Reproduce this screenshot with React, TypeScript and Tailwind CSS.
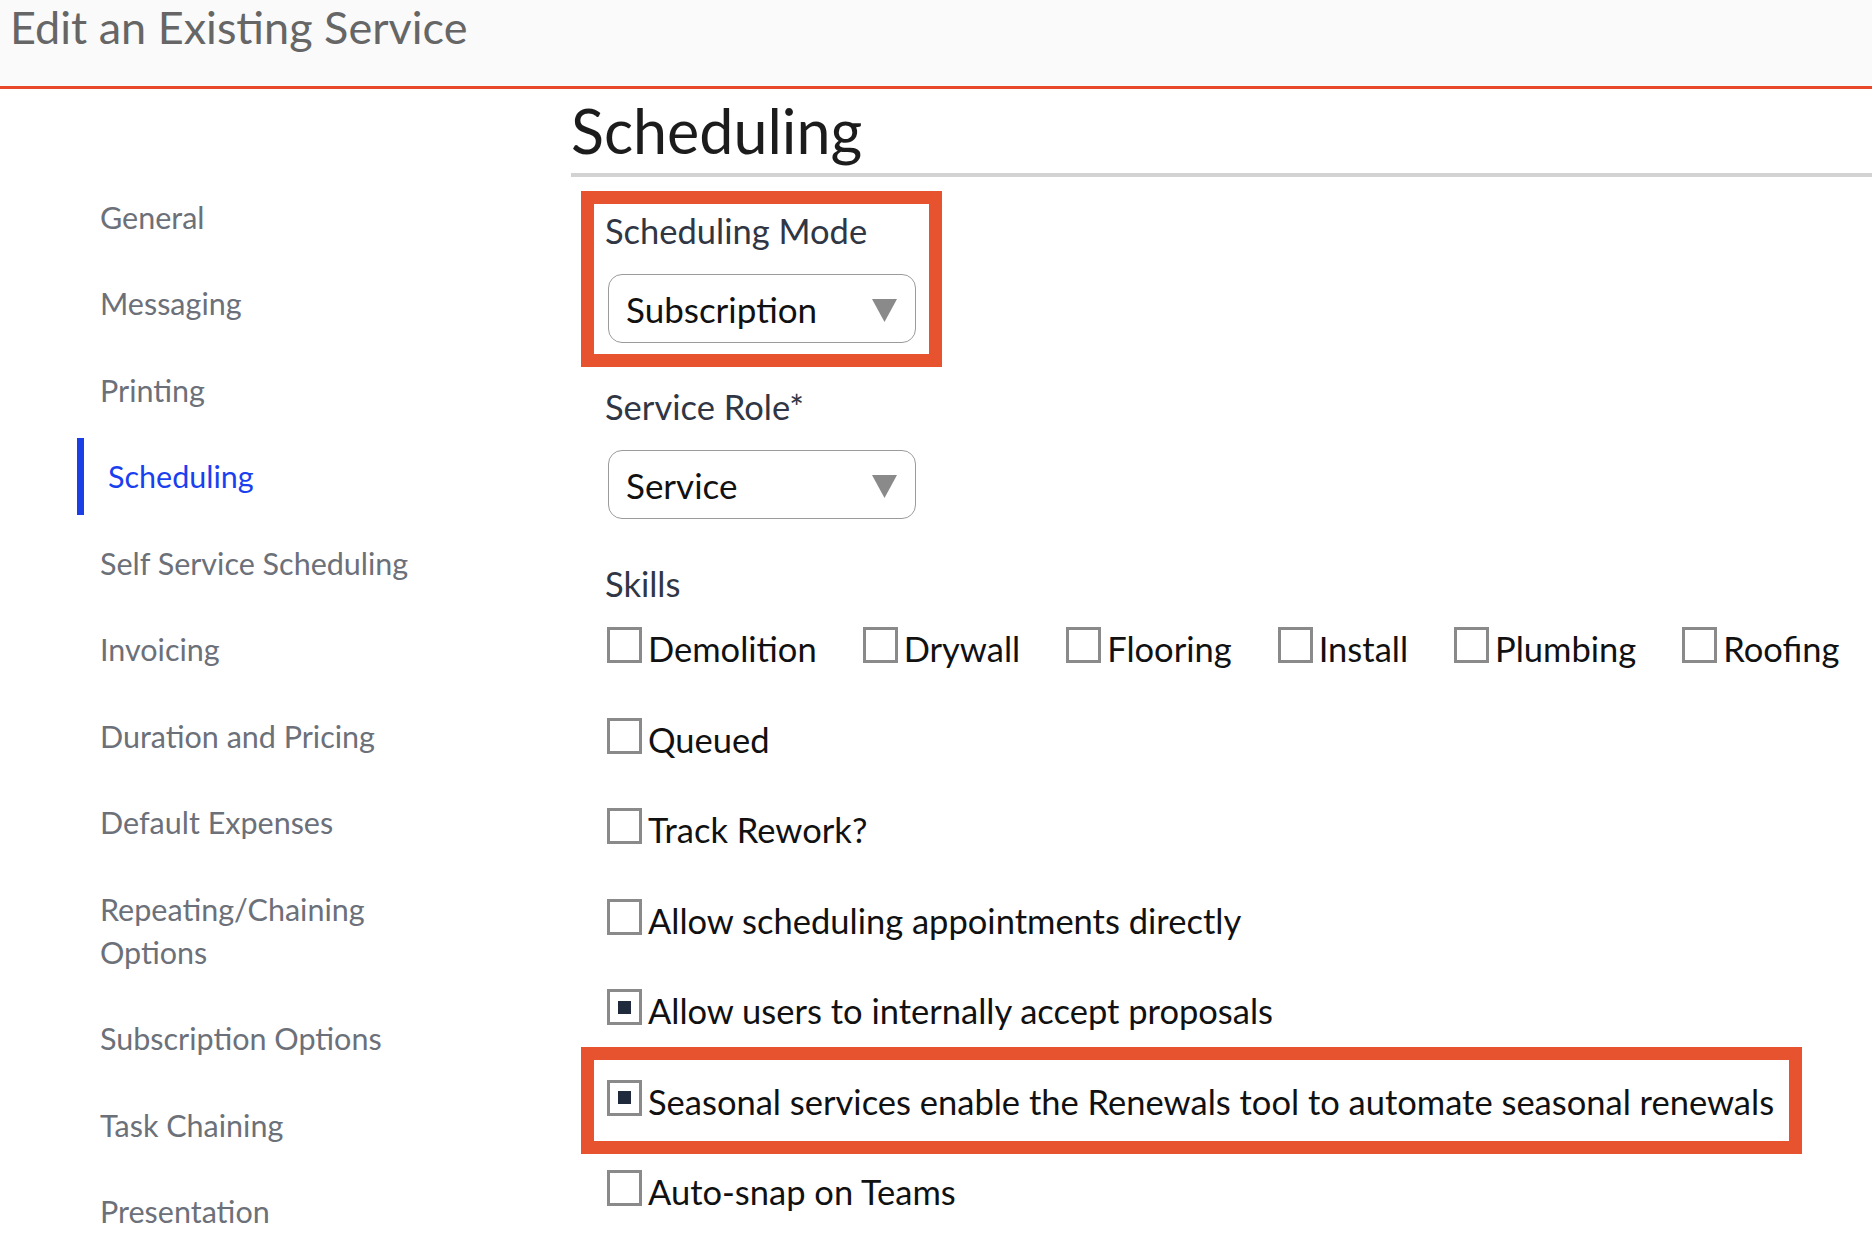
import React from 'react';

const navItems = [
  'General',
  'Messaging',
  'Printing',
  'Scheduling',
  'Self Service Scheduling',
  'Invoicing',
  'Duration and Pricing',
  'Default Expenses',
  'Repeating/Chaining Options',
  'Subscription Options',
  'Task Chaining',
  'Presentation',
];

const skills = ['Demolition', 'Drywall', 'Flooring', 'Install', 'Plumbing', 'Roofing'];

const options = [
  { label: 'Queued', checked: false },
  { label: 'Track Rework?', checked: false },
  { label: 'Allow scheduling appointments directly', checked: false },
  { label: 'Allow users to internally accept proposals', checked: true },
  { label: 'Seasonal services enable the Renewals tool to automate seasonal renewals', checked: true, highlight: true },
  { label: 'Auto-snap on Teams', checked: false },
];

const Checkbox: React.FC<{ checked?: boolean }> = ({ checked }) => (
  <span className="flex h-[36px] w-[35px] shrink-0 items-center justify-center border-[3px] border-[#8a8a8a] bg-white">
    {checked && <span className="h-[13px] w-[13px] bg-[#1f2a3c]" />}
  </span>
);

const CheckLabel: React.FC<{ label: string; checked?: boolean }> = ({ label, checked }) => (
  <div className="flex h-[36px] items-center">
    <Checkbox checked={checked} />
    <span className="ml-[6px] mt-[7px] whitespace-nowrap text-[34.5px] leading-[41px] text-[#111111]">{label}</span>
  </div>
);

const Select: React.FC<{ value: string }> = ({ value }) => (
  <div className="ml-[3px] flex h-[69px] w-[308px] items-center justify-between rounded-[14px] border-[1.5px] border-[#9b9b9b] bg-white pl-[17px] pr-[18px]">
    <span className="text-[35px] leading-[42px] text-[#111111]">{value}</span>
    <svg width="25" height="23" viewBox="0 0 25 23" className="mt-[4px]">
      <polygon points="0,0 25,0 12.5,23" fill="#8a8a8a" />
    </svg>
  </div>
);

const App: React.FC = () => {
  return (
    <div className="min-h-screen overflow-hidden bg-white font-['Lato',sans-serif]">
      {/* Header */}
      <header className="h-[89px] border-b-[3px] border-[#e8492b] bg-[#fafafa] pl-[10px]">
        <h1 className="text-[45px] leading-[55px] text-[#666666]">Edit an Existing Service</h1>
      </header>

      <div className="flex">
        {/* Side nav */}
        <nav className="w-[571px] shrink-0 pl-[77px] pt-[89.5px]">
          <ul className="flex w-[365px] flex-col gap-[9.5px]">
            {navItems.map((item) => {
              const active = item === 'Scheduling';
              return (
                <li
                  key={item}
                  className={
                    active
                      ? 'border-l-[7px] border-[#1b3fe6] py-[17px] pl-[24px] text-[30.5px] leading-[43px] text-[#1a3ff0]'
                      : 'py-[17px] pl-[23px] text-[30.5px] leading-[43px] text-[#6c7079]'
                  }
                >
                  {item}
                </li>
              );
            })}
          </ul>
        </nav>

        {/* Main */}
        <main className="flex-1">
          <div className="mt-[6px] border-b-[4px] border-[#d2d2d2] pb-[6px]">
            <h2 className="text-[61px] leading-[72px] text-[#1c1c1c]">Scheduling</h2>
          </div>

          <div className="pl-[34px]">
            {/* Scheduling Mode */}
            <div className="relative mt-[34px]">
              <div className="text-[34.5px] leading-[40px] text-[#303644]">Scheduling Mode</div>
              <div className="mt-[23px]">
                <Select value="Subscription" />
              </div>
              <div className="pointer-events-none absolute -left-[24px] -top-[20px] h-[176px] w-[361px] border-[13px] border-[#e8532f]" />
            </div>

            {/* Service Role */}
            <div className="mt-[44px] text-[34.5px] leading-[40px] text-[#303644]">Service Role*</div>
            <div className="mt-[23px]">
              <Select value="Service" />
            </div>

            {/* Skills */}
            <div className="mt-[45px] text-[34.5px] leading-[40px] text-[#303644]">Skills</div>
            <div className="ml-[2px] mt-[23px] flex gap-[46px]">
              {skills.map((s) => (
                <CheckLabel key={s} label={s} />
              ))}
            </div>

            <div className="ml-[2px] flex flex-col">
              {options.map((o) => (
                <div key={o.label} className="relative mt-[54.5px]">
                  <CheckLabel label={o.label} checked={o.checked} />
                  {o.highlight && (
                    <div className="pointer-events-none absolute -left-[26px] -top-[32.5px] h-[107px] w-[1221px] border-[13px] border-[#e8532f]" />
                  )}
                </div>
              ))}
            </div>
          </div>
        </main>
      </div>
    </div>
  );
};

export default App;
